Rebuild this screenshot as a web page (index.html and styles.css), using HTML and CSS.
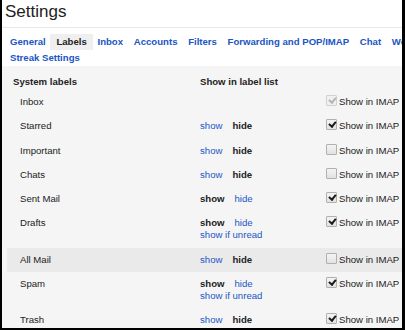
FILE: index.html
```html
<!DOCTYPE html>
<html lang="en">
<head>
  <meta charset="UTF-8" />
  <meta name="viewport" content="width=device-width, initial-scale=1.0" />
  <title>Settings</title>
  <link rel="stylesheet" href="styles.css">
</head>
<body>
  <div class="frame">
    <h1 class="title">Settings</h1>

    <div class="tabs">
      <a href="#" class="tab">General</a>
      <span class="tab current">Labels</span>
      <a href="#" class="tab">Inbox</a>
      <a href="#" class="tab">Accounts</a>
      <a href="#" class="tab">Filters</a>
      <a href="#" class="tab">Forwarding and POP/IMAP</a>
      <a href="#" class="tab">Chat</a>
      <a href="#" class="tab">Web Clips</a>
    </div>
    <div class="tabs">
      <a href="#" class="tab">Streak Settings</a>
    </div>

    <div class="content">
      <div class="row head">
        <div class="name">System labels</div>
        <div class="vis">Show in label list</div>
        <div></div>
      </div>

      <div class="row">
        <div class="name">Inbox</div>
        <div class="vis"></div>
        <div class="imap"><span class="box checked disabled"></span>Show in IMAP</div>
      </div>
      <div class="row">
        <div class="name">Starred</div>
        <div class="vis"><a href="#">show</a><b>hide</b></div>
        <div class="imap"><span class="box checked"></span>Show in IMAP</div>
      </div>
      <div class="row">
        <div class="name">Important</div>
        <div class="vis"><a href="#">show</a><b>hide</b></div>
        <div class="imap"><span class="box"></span>Show in IMAP</div>
      </div>
      <div class="row">
        <div class="name">Chats</div>
        <div class="vis"><a href="#">show</a><b>hide</b></div>
        <div class="imap"><span class="box"></span>Show in IMAP</div>
      </div>
      <div class="row">
        <div class="name">Sent Mail</div>
        <div class="vis"><b>show</b><a href="#">hide</a></div>
        <div class="imap"><span class="box checked"></span>Show in IMAP</div>
      </div>
      <div class="row">
        <div class="name">Drafts</div>
        <div class="vis"><b>show</b><a href="#">hide</a><br><a href="#">show if unread</a></div>
        <div class="imap"><span class="box checked"></span>Show in IMAP</div>
      </div>
      <div class="row hover">
        <div class="name">All Mail</div>
        <div class="vis"><a href="#">show</a><b>hide</b></div>
        <div class="imap"><span class="box"></span>Show in IMAP</div>
      </div>
      <div class="row">
        <div class="name">Spam</div>
        <div class="vis"><b>show</b><a href="#">hide</a><br><a href="#">show if unread</a></div>
        <div class="imap"><span class="box checked"></span>Show in IMAP</div>
      </div>
      <div class="row">
        <div class="name">Trash</div>
        <div class="vis"><a href="#">show</a><b>hide</b></div>
        <div class="imap"><span class="box checked"></span>Show in IMAP</div>
      </div>
    </div>
  </div>
</body>
</html>
```

FILE: styles.css
```css
html, body {
  margin: 0;
  padding: 0;
}
body {
  font-family: "Liberation Sans", Arial, sans-serif;
  color: #222;
}
.frame {
  width: 405px;
  height: 330px;
  box-sizing: border-box;
  border-left: 2px solid #000;
  border-right: 3px solid #000;
  border-bottom: 2px solid #000;
  background: #fff;
  overflow: hidden;
}
.title {
  margin: 0;
  padding: 1px 0 0 3px;
  height: 26px;
  line-height: 22px;
  font-size: 17px;
  font-weight: normal;
  color: #222;
  border-bottom: 1px solid #e8e8e8;
}
.tabs {
  white-space: nowrap;
  overflow: hidden;
  padding-left: 2px;
  font-size: 9.6px;
  line-height: 12px;
  font-weight: bold;
}
.title + .tabs {
  margin-top: 6px;
}
.tab {
  display: inline-block;
  padding: 2px 6px;
  color: #1a55c4;
  text-decoration: none;
  margin-right: -4px;
}
.tab.current {
  color: #222;
  background: #efefef;
}
.content {
  background: #f5f5f5;
  padding-left: 5px;
  height: 100%;
  font-size: 9.6px;
}
.row {
  display: grid;
  grid-template-columns: 191px 128px 1fr;
  line-height: 12px;
  padding: 6px 0 6.25px;
}
.row .name {
  padding-left: 13px;
}
.row.head {
  padding: 10px 0 2px;
  font-weight: bold;
}
.row.head .name {
  padding-left: 6px;
}
.row.hover {
  background: #eaeaea;
}
.vis {
  padding-left: 2px;
}
.vis a {
  color: #1a55c4;
  text-decoration: none;
}
.vis a, .vis b {
  display: inline-block;
  margin-right: 10px;
}
.imap {
  display: flex;
  align-items: flex-start;
  white-space: nowrap;
}
.box {
  width: 9px;
  height: 9px;
  margin-right: 2px;
  border: 1px solid #b0b0b0;
  border-radius: 1px;
  background: linear-gradient(#f4f4f4, #e2e2e2);
  position: relative;
  top: -1px;
  flex: none;
}
.box.checked::after {
  content: "";
  position: absolute;
  left: 2.5px;
  top: 0;
  width: 2.5px;
  height: 5px;
  border: solid #1a1a1a;
  border-width: 0 2px 2px 0;
  transform: rotate(40deg);
}
.box.disabled {
  border-color: #d2d2d2;
  background: #f0f0f0;
}
.box.disabled::after {
  border-color: #b4b4b4;
}
```
